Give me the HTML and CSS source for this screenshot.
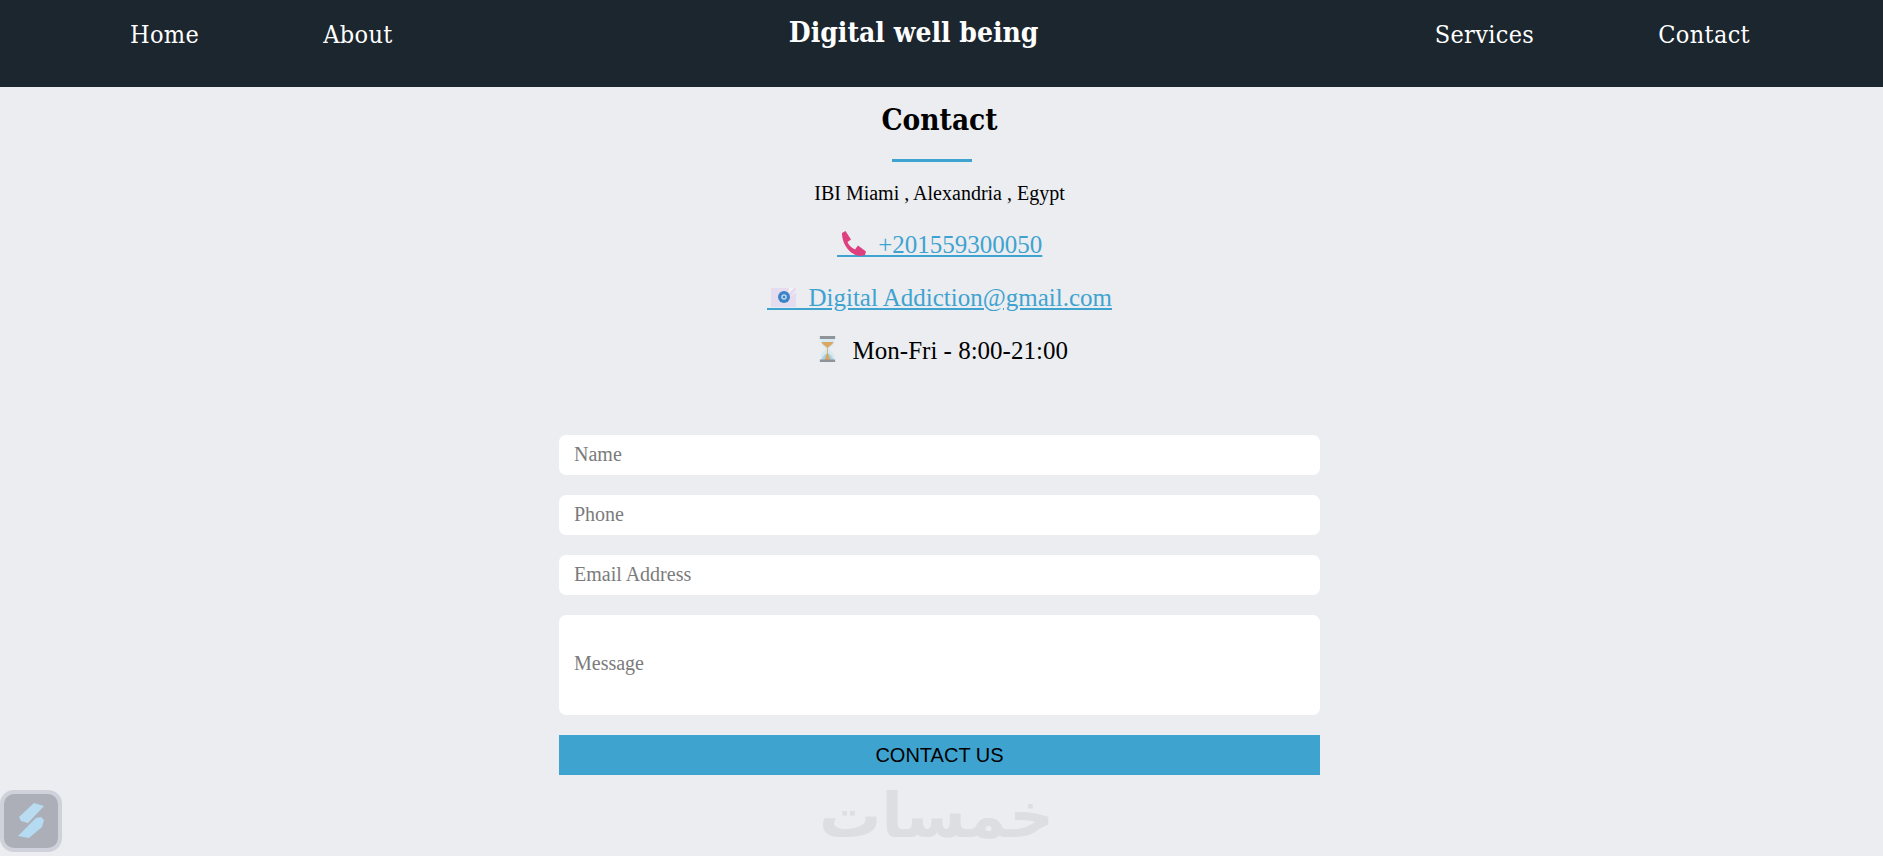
FILE: index.html
```html
<!DOCTYPE html>
<html lang="en">
<head>
<meta charset="utf-8">
<title>Digital well being</title>
<link rel="stylesheet" href="styles.css">
</head>
<body>
<header class="topbar">
  <nav class="nav-group">
    <a class="nav-link" href="#">Home</a>
    <a class="nav-link" href="#">About</a>
  </nav>
  <div class="brand">Digital well being</div>
  <nav class="nav-group">
    <a class="nav-link" href="#">Services</a>
    <a class="nav-link" href="#">Contact</a>
  </nav>
</header>
<main class="contact">
  <h2 class="contact-title">Contact</h2>
  <div class="title-rule"></div>
  <p class="address">IBI Miami , Alexandria , Egypt</p>
  <p class="info"><a class="info-link" href="#"><svg class="icon" viewBox="0 0 29 27" preserveAspectRatio="xMidYMin meet"><path d="M5 3 8.500 1 14 9.500 10.500 12C11.500 15 14.500 18 18 19.500L21 15.500 29 21.500 28 25 24 26C14 26 5 15 5 3Z" fill="#de3f7e"/></svg>&nbsp;&nbsp;+201559300050</a></p>
  <p class="info"><a class="info-link" href="#"><svg class="icon" viewBox="0 0 29 27" preserveAspectRatio="xMidYMin meet"><path d="M4 5h25v19H4z" fill="#e6dcef"/><path d="M22 5h5l-6 6zM29 7v2l-6 5z" fill="#f6f2f8"/><circle cx="17" cy="14" r="6" fill="#3c84c6"/><circle cx="17" cy="14" r="2.800" fill="#b9d6ee"/><circle cx="17" cy="14" r="1.300" fill="#3c84c6"/></svg>&nbsp;&nbsp;Digital Addiction@gmail.com</a></p>
  <p class="info"><svg class="icon" viewBox="0 0 29 27" preserveAspectRatio="xMidYMin meet"><g transform="translate(8 0) scale(.85 1)"><path d="M2 2h16v4c0 3-5 5-6 7 1 2 6 4 6 7v4H2v-4c0-3 5-5 6-7-1-2-6-4-6-7z" fill="#d6e8f0"/><path d="M3 6h14c-1 3-6 4-7 7-1-3-6-4-7-7z" fill="#d9a760"/><path d="M3 24c1-4 5-6 7-7 2 1 6 3 7 7z" fill="#a9d2e8"/><path d="M9.500 13h1v4l3 7h-7l3-7z" fill="#d9a760"/><path d="M1 0h18v3H1zM1 23.500h18V26H1z" fill="#8f949b"/></g></svg>&nbsp;&nbsp;Mon-Fri - 8:00-21:00</p>
  <form class="contact-form">
    <input class="field" type="text" placeholder="Name">
    <input class="field" type="text" placeholder="Phone">
    <input class="field" type="text" placeholder="Email Address">
    <textarea class="field field-message" placeholder="Message"></textarea>
    <button class="submit" type="button">CONTACT US</button>
  </form>
</main>
<div class="watermark" lang="ar" dir="rtl">خمسات</div>
<div class="badge">
  <svg class="badge-icon" viewBox="0 0 27 36"><path d="M16 0 26 3 10 20 3 18 1 14Z" fill="#b9dcf0"/><path d="M18 15 23 14 26 17 24 24 11 35 0 33Z" fill="#b5dbf2"/></svg>
</div>
</body>
</html>
```
FILE: styles.css
```css
* { box-sizing: border-box; }
body {
  margin: 0;
  min-height: 856px;
  background: #ebedf1;
  color: #000;
  font-family: "Liberation Serif", serif;
  position: relative;
}
.topbar {
  height: 87px;
  background: #1b262e;
  display: flex;
  justify-content: space-between;
  align-items: flex-start;
  padding: 20px 133px 0 130px;
}
.nav-group { display: flex; gap: 124px; }
.nav-link {
  color: #fff;
  text-decoration: none;
  font-family: "DejaVu Serif Condensed", "DejaVu Serif", serif;
  font-size: 25px;
  letter-spacing: .35px;
  line-height: 30px;
}
.brand {
  color: #fff;
  font-family: "DejaVu Serif Condensed", "DejaVu Serif", serif;
  font-weight: 700;
  font-size: 28px;
  line-height: 26px;
}
.contact {
  display: flex;
  flex-direction: column;
  align-items: center;
  padding-right: 4px;
}
.contact-title {
  margin: 13px 0 0;
  font-family: "DejaVu Serif Condensed", "DejaVu Serif", serif;
  font-weight: 700;
  font-size: 29.5px;
  line-height: 40px;
}
.title-rule {
  width: 80px;
  height: 3px;
  background: #3fa3d0;
  margin: 19px 15px 0 0;
}
.address {
  margin: 20px 0 0;
  font-size: 20px;
  line-height: 22px;
}
.info {
  margin: 26px 0 0;
  font-size: 25px;
  line-height: 30px;
  height: 30px;
}
.info + .info { margin-top: 23px; }
.info-link { color: #3fa3d0; text-decoration: underline; }
.icon { display: inline; width: 29px; height: 27px; vertical-align: -4px; }
.info-link .icon {
  background: linear-gradient(#3fa3d0, #3fa3d0) left bottom / 100% 2px no-repeat;
}
.contact-form {
  width: 761px;
  margin-top: 69px;
  display: flex;
  flex-direction: column;
  gap: 20px;
}
.field {
  display: block;
  width: 100%;
  height: 40px;
  border: 0;
  border-radius: 7px;
  background: #fff;
  padding: 0 15px 2px;
  font-family: "Liberation Serif", serif;
  font-size: 20px;
  resize: none;
  outline: 0;
}
.field::placeholder { color: #7b7b7b; }
.field-message { height: 100px; padding-top: 37px; line-height: 23px; }
.submit {
  height: 40px;
  border: 0;
  border-radius: 0;
  background: #3fa3d0;
  color: #000;
  font-family: "Liberation Sans", sans-serif;
  font-size: 20px;
  padding: 0;
}
.watermark {
  position: absolute;
  left: 828px;
  top: 779px;
  width: 226px;
  text-align: center;
  color: #dcdee1;
  font-family: "DejaVu Sans", sans-serif;
  font-weight: 700;
  font-size: 62px;
  line-height: 74px;
}
.badge {
  position: absolute;
  left: 0;
  top: 790px;
  width: 62px;
  height: 62px;
  border: 4px solid #cfd2da;
  border-radius: 14px;
  background: #acafb8;
  display: flex;
  align-items: center;
  justify-content: center;
}
.badge-icon { width: 27px; height: 36px; }
```
